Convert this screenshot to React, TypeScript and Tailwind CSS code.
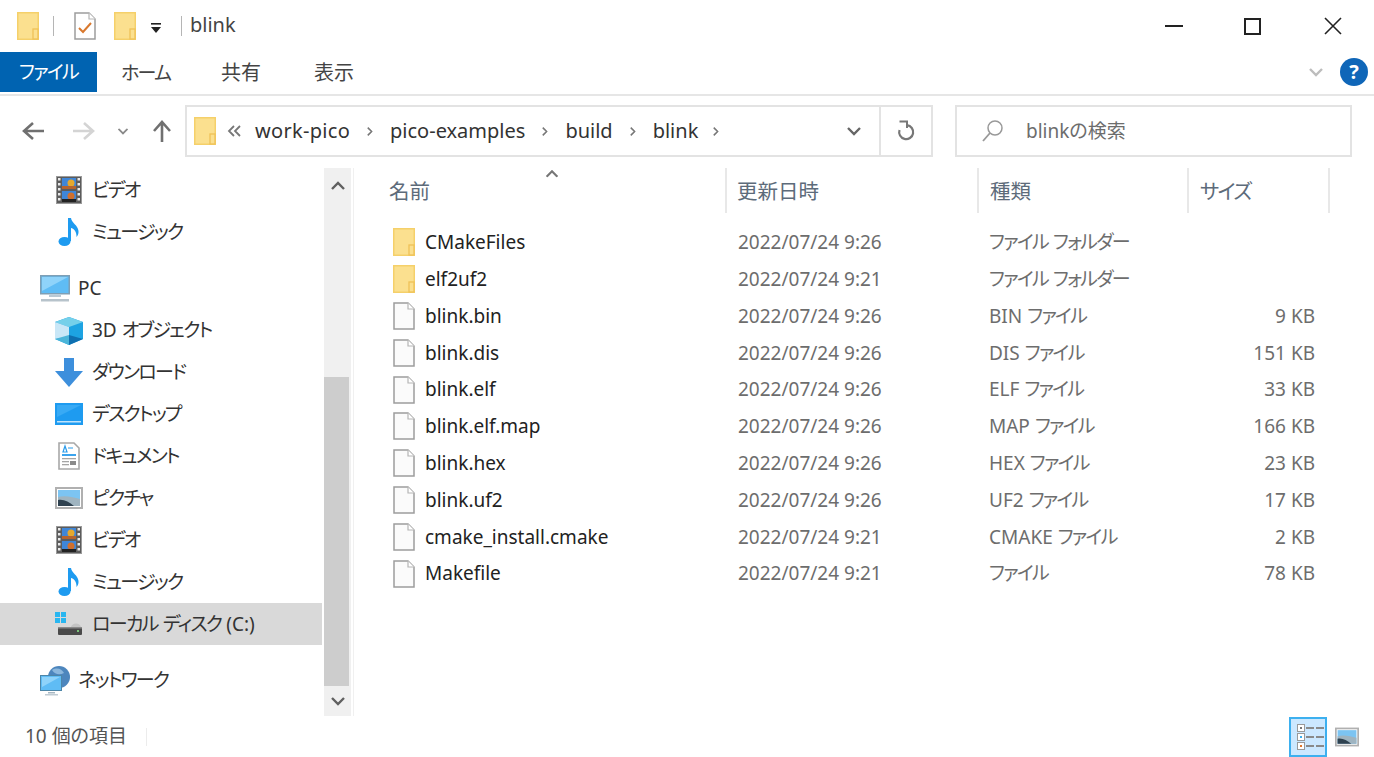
import React from 'react';

const FONT = '"Noto Sans", "Noto Sans CJK JP", sans-serif';

// katakana runs sit tighter in the reference than in Noto, so pull just those in
const Txt: React.FC<{ children: string }> = ({ children }) => (
  <>
    {children.split(/([\u30A0-\u30FF]+)/).map((part, i) =>
      i % 2 === 1 ? <span key={i} className="tracking-[-1.7px]">{part}</span> : part
    )}
  </>
);

const FolderIcon: React.FC<{ className?: string }> = ({ className = '' }) => (
  <svg className={className} viewBox="0 0 22 28" width="22" height="28">
    <rect x="0.75" y="0.75" width="20.5" height="26.5" fill="#fbe08f" stroke="#f5d06a" strokeWidth="1.5" />
    <rect x="16" y="17" width="5" height="10" fill="#fbe08f" stroke="#efc258" strokeWidth="1.3" />
  </svg>
);

const FileIcon: React.FC = () => (
  <svg viewBox="0 0 22 28" width="22" height="28">
    <path d="M1 1H15L21 7V27H1Z" fill="#fbfbfb" stroke="#9d9d9d" strokeWidth="1.5" />
    <path d="M15 1V7H21" fill="#fff" stroke="#b5b5b5" strokeWidth="1.2" />
  </svg>
);

const FilmIcon: React.FC = () => (
  <svg viewBox="0 0 26 28" width="26" height="28">
    <rect x="0.5" y="0.5" width="25" height="27" fill="#5c5c5c" stroke="#9a9a9a" />
    <rect x="6" y="2" width="14" height="11" fill="#3f86d8" />
    <rect x="6" y="15" width="14" height="11" fill="#3f86d8" />
    <circle cx="15" cy="7" r="3.5" fill="#e5a82e" />
    <rect x="6" y="10" width="14" height="3" fill="#b5642e" />
    <circle cx="15" cy="20" r="3.5" fill="#d2702c" />
    <rect x="6" y="23" width="14" height="3" fill="#222" />
    {[3, 8, 13, 18, 23].map(y => (
      <React.Fragment key={y}>
        <rect x="2" y={y - 1} width="2.5" height="2.5" fill="#e8e8e8" />
        <rect x="21.5" y={y - 1} width="2.5" height="2.5" fill="#e8e8e8" />
      </React.Fragment>
    ))}
  </svg>
);

const MusicIcon: React.FC = () => (
  <svg viewBox="0 0 22 30" width="22" height="30">
    <ellipse cx="6.5" cy="24.5" rx="6" ry="4.6" fill="#1e9bf0" />
    <path d="M10 24V1H13C13.5 6 20 8 20.5 14C20.8 17 19.5 19 18.5 20C18.8 14 15.5 11.5 13 11V24Z" fill="#1e9bf0" />
  </svg>
);

const MonitorIcon: React.FC = () => (
  <svg viewBox="0 0 30 28" width="30" height="28">
    <rect x="0.75" y="0.75" width="28.5" height="18" fill="#5fbcf5" stroke="#7f9fb5" strokeWidth="1.5" />
    <path d="M2 2H28L2 16Z" fill="#8fd3fa" />
    <rect x="9" y="20" width="12" height="2" fill="#b9c9d4" />
    <rect x="1" y="24" width="28" height="2.5" fill="#b7c3cb" />
  </svg>
);

const CubeIcon: React.FC = () => (
  <svg viewBox="0 0 28 28" width="28" height="28">
    <path d="M14 0L28 5V22L14 28L0 22V5Z" fill="#1da3e2" />
    <path d="M0 5L14 0L28 5L14 10Z" fill="#75d0ea" />
    <path d="M0 5L14 10V20L0 22Z" fill="#c9e7f7" />
    <path d="M0 22L14 18V28Z" fill="#4bb5d9" />
    <path d="M28 22L14 18V28Z" fill="#0f6fb0" />
  </svg>
);

const DownloadIcon: React.FC = () => (
  <svg viewBox="0 0 28 30" width="28" height="30">
    <path d="M9 0H19V13H28L14 29L0 13H9Z" fill="#3d8fdc" />
  </svg>
);

const DesktopIcon: React.FC = () => (
  <svg viewBox="0 0 28 22" width="28" height="22">
    <rect width="28" height="22" fill="#1e9bf0" />
    <path d="M2 2H26L2 14Z" fill="#38aaf5" />
    <rect x="2" y="18" width="24" height="1.5" fill="#bfe3fb" />
  </svg>
);

const DocIcon: React.FC = () => (
  <svg viewBox="0 0 22 28" width="22" height="28">
    <path d="M1 1H16L21 6V27H1Z" fill="#fff" stroke="#a8a8a8" strokeWidth="1.6" />
    <path d="M7 4L5 10H9ZM10 6H15" stroke="#2a9bea" strokeWidth="1.2" fill="none" />
    <rect x="4" y="12" width="14" height="2" fill="#3ba4ee" />
    <rect x="4" y="16" width="14" height="1.3" fill="#a5a5a5" />
    <rect x="4" y="19" width="7" height="1.3" fill="#a5a5a5" />
    <rect x="12" y="19" width="6" height="4" fill="#8a8a8a" />
    <rect x="4" y="22" width="7" height="1.3" fill="#a5a5a5" />
  </svg>
);

const PictureIcon: React.FC<{ w?: number; h?: number }> = ({ w = 28, h = 22 }) => (
  <svg viewBox="0 0 28 22" width={w} height={h}>
    <rect x="1" y="1" width="26" height="20" fill="#fff" stroke="#b0b0b0" strokeWidth="2" />
    <rect x="3" y="3" width="22" height="16" fill="#7cc4f2" />
    <path d="M3 10C10 8 18 10 25 12V19H3Z" fill="#9fb4c0" />
    <path d="M3 13C9 12 14 15 19 19H3Z" fill="#2f4250" />
  </svg>
);

const DriveIcon: React.FC = () => (
  <svg viewBox="0 0 28 24" width="28" height="24">
    <rect x="0" y="0" width="5" height="5" fill="#29b6f0" />
    <rect x="6" y="0" width="5" height="5" fill="#29b6f0" />
    <rect x="0" y="6" width="5" height="5" fill="#29b6f0" />
    <rect x="6" y="6" width="5" height="5" fill="#29b6f0" />
    <path d="M16 15C17 11 24 10 26 15Z" fill="#c4c4c4" />
    <rect x="3" y="15" width="24" height="8" rx="1" fill="#4a4a4a" />
    <rect x="3" y="15" width="24" height="1.5" fill="#8a8a8a" />
    <rect x="22" y="18" width="2" height="2" fill="#7bc47b" />
  </svg>
);

const NetworkIcon: React.FC = () => (
  <svg viewBox="0 0 30 30" width="30" height="30">
    <circle cx="19" cy="11" r="11" fill="#4d86bd" />
    <path d="M12 4C17 1 22 3 24 7C20 9 15 9 12 4Z" fill="#8bb7dd" />
    <rect x="0.5" y="9.5" width="21" height="15" fill="#5fbcf5" stroke="#4d86a8" />
    <path d="M2 11H20L2 21Z" fill="#8fd3fa" />
    <rect x="8" y="26" width="7" height="1.5" fill="#a7b7c2" />
    <rect x="5" y="28" width="13" height="1.5" fill="#c0ccd4" />
  </svg>
);

const CheckIcon: React.FC = () => (
  <svg viewBox="0 0 22 28" width="22" height="28">
    <path d="M1 1H15L21 7V27H1Z" fill="#fff" stroke="#9d9d9d" strokeWidth="1.5" />
    <path d="M15 1V7H21" fill="#fff" stroke="#b5b5b5" strokeWidth="1.2" />
    <path d="M5 16L9 20L17 11" fill="none" stroke="#d9782d" strokeWidth="2" />
  </svg>
);

const Chevron: React.FC<{ up?: boolean; className?: string; color?: string }> = ({ up, className = '', color = '#666' }) => (
  <svg className={className} viewBox="0 0 14 9" width="14" height="9">
    <path d={up ? 'M1 8L7 2L13 8' : 'M1 1L7 7L13 1'} fill="none" stroke={color} strokeWidth="2.4" />
  </svg>
);

const navItems = [
  { label: 'ビデオ', icon: <FilmIcon /> },
  { label: 'ミュージック', icon: <MusicIcon /> },
  { label: 'PC', icon: <MonitorIcon />, top: true, gap: true },
  { label: '3D オブジェクト', icon: <CubeIcon /> },
  { label: 'ダウンロード', icon: <DownloadIcon /> },
  { label: 'デスクトップ', icon: <DesktopIcon /> },
  { label: 'ドキュメント', icon: <DocIcon /> },
  { label: 'ピクチャ', icon: <PictureIcon /> },
  { label: 'ビデオ', icon: <FilmIcon /> },
  { label: 'ミュージック', icon: <MusicIcon /> },
  { label: 'ローカル ディスク (C:)', icon: <DriveIcon />, selected: true },
  { label: 'ネットワーク', icon: <NetworkIcon />, top: true, gap: true },
];

const files = [
  { name: 'CMakeFiles', date: '2022/07/24 9:26', type: 'ファイル フォルダー', size: '', folder: true },
  { name: 'elf2uf2', date: '2022/07/24 9:21', type: 'ファイル フォルダー', size: '', folder: true },
  { name: 'blink.bin', date: '2022/07/24 9:26', type: 'BIN ファイル', size: '9 KB' },
  { name: 'blink.dis', date: '2022/07/24 9:26', type: 'DIS ファイル', size: '151 KB' },
  { name: 'blink.elf', date: '2022/07/24 9:26', type: 'ELF ファイル', size: '33 KB' },
  { name: 'blink.elf.map', date: '2022/07/24 9:26', type: 'MAP ファイル', size: '166 KB' },
  { name: 'blink.hex', date: '2022/07/24 9:26', type: 'HEX ファイル', size: '23 KB' },
  { name: 'blink.uf2', date: '2022/07/24 9:26', type: 'UF2 ファイル', size: '17 KB' },
  { name: 'cmake_install.cmake', date: '2022/07/24 9:21', type: 'CMAKE ファイル', size: '2 KB' },
  { name: 'Makefile', date: '2022/07/24 9:21', type: 'ファイル', size: '78 KB' },
];

const crumbs = ['work-pico', 'pico-examples', 'build', 'blink'];

const App: React.FC = () => {
  return (
    <div className="w-[1374px] h-[757px] bg-white overflow-hidden flex flex-col text-[19px] text-[#333] [font-feature-settings:'palt']" style={{ fontFamily: FONT }}>
      {/* Title bar */}
      <div className="h-[52px] flex items-center shrink-0">
        <FolderIcon className="ml-[17px]" />
        <div className="ml-[14px] w-px h-[20px] bg-[#b5b5b5]" />
        <div className="ml-[20px] flex"><CheckIcon /></div>
        <FolderIcon className="ml-[18px]" />
        <svg className="ml-[14px] mt-[3px]" viewBox="0 0 12 12" width="12" height="12">
          <rect x="1" y="1" width="10" height="1.6" fill="#222" />
          <path d="M1 5H11L6 11Z" fill="#222" />
        </svg>
        <div className="ml-[19px] w-px h-[20px] bg-[#b5b5b5]" />
        <span className="ml-[8px] mb-[2px] text-[#444] text-[20px] leading-none">blink</span>
        <div className="ml-auto flex items-center">
          <div className="w-[18px] h-[2px] bg-[#222] mr-[61px]" />
          <div className="w-[17px] h-[17px] border-2 border-[#222] mr-[63px]" />
          <svg className="mr-[32px]" viewBox="0 0 18 18" width="18" height="18">
            <path d="M1 1L17 17M17 1L1 17" stroke="#222" strokeWidth="1.6" />
          </svg>
        </div>
      </div>

      {/* Ribbon tabs */}
      <div className="h-[44px] shrink-0 flex items-start border-b-2 border-[#e6e6e6]">
        <div className="w-[97px] h-[40px] bg-[#0063b1] text-white flex items-center justify-center"><Txt>ファイル</Txt></div>
        <div className="h-[40px] w-[100px] flex items-center pt-[2px] pl-[24px] text-[#444]"><Txt>ホーム</Txt></div>
        <div className="h-[40px] w-[117px] flex items-center pt-[2px] pl-[24px] text-[#444] text-[20px]">共有</div>
        <div className="h-[40px] flex items-center pt-[2px] text-[#444] text-[20px]">表示</div>
        <div className="ml-auto h-[40px] flex items-center">
          <Chevron className="mr-[17px]" color="#bdbdbd" />
          <div className="w-[28px] h-[28px] mr-[6px] rounded-full bg-[#0f66b8] text-white text-[20px] font-bold flex items-center justify-center">?</div>
        </div>
      </div>

      {/* Address row */}
      <div className="h-[72px] shrink-0 flex items-start pt-[9px]">
        <div className="w-[185px] h-[52px] flex items-center">
          <svg className="ml-[21px]" viewBox="0 0 24 22" width="24" height="22">
            <path d="M23 11H4M12 3L3 11L12 19" fill="none" stroke="#707070" strokeWidth="2.6" />
          </svg>
          <svg className="ml-[27px]" viewBox="0 0 24 22" width="24" height="22">
            <path d="M1 11H20M12 3L21 11L12 19" fill="none" stroke="#d4d4d4" strokeWidth="2.6" />
          </svg>
          <Chevron className="ml-[20px] scale-75" color="#8a8a8a" />
          <svg className="ml-[21px]" viewBox="0 0 22 24" width="22" height="24">
            <path d="M11 23V4M3 12L11 3L19 12" fill="none" stroke="#707070" strokeWidth="2.6" />
          </svg>
        </div>
        <div className="w-[748px] h-[52px] border-2 border-[#e3e3e3] flex items-center text-[20px]">
          <FolderIcon className="ml-[7px]" />
          <svg className="ml-[11px]" viewBox="0 0 15 12" width="15" height="12">
            <path d="M7 1L2 6L7 11M13 1L8 6L13 11" fill="none" stroke="#777" strokeWidth="1.8" />
          </svg>
          <span className="ml-[13px] tracking-[0.3px]">{crumbs[0]}</span>
          {crumbs.slice(1).map(c => (
            <React.Fragment key={c}>
              <Chevron className="mx-[13px] rotate-[-90deg] scale-[0.65]" color="#777" />
              <span>{c}</span>
            </React.Fragment>
          ))}
          <Chevron className="ml-[11px] rotate-[-90deg] scale-[0.65]" color="#777" />
          <Chevron className="ml-auto mr-[18px]" color="#666" />
          <div className="w-[52px] h-full border-l-2 border-[#e3e3e3] flex items-center justify-center">
            <svg viewBox="0 0 20 22" width="20" height="22">
              <path d="M11 5.2A7 7 0 1 1 3.5 10" fill="none" stroke="#777" strokeWidth="2.2" />
              <path d="M3.5 1.5H11V8" fill="none" stroke="#777" strokeWidth="2" />
            </svg>
          </div>
        </div>
        <div className="ml-[22px] w-[397px] h-[52px] border-2 border-[#e3e3e3] flex items-center">
          <svg className="ml-[24px]" viewBox="0 0 24 24" width="24" height="24">
            <circle cx="14" cy="9" r="7" fill="none" stroke="#999" strokeWidth="1.5" />
            <path d="M9 14L2 22" stroke="#999" strokeWidth="1.8" />
          </svg>
          <span className="ml-[21px] text-[#6d6d6d]">blinkの検索</span>
        </div>
      </div>

      {/* Body */}
      <div className="h-[548px] shrink-0 flex min-h-0">
        {/* Navigation pane */}
        <div className="w-[322px] shrink-0 flex flex-col pt-[1px]">
          {navItems.map((item, i) => (
            <div
              key={i}
              className={`h-[41.9px] shrink-0 flex items-center ${item.gap ? 'mt-[15px]' : ''} ${item.selected ? 'bg-[#d9d9d9]' : ''}`}
            >
              <div className={`flex items-center justify-center shrink-0 ${item.top ? 'ml-[40px] w-[30px]' : 'ml-[55px] w-[28px]'}`}>{item.icon}</div>
              <span className={`whitespace-nowrap text-[#333] ${item.top ? 'ml-[8px]' : 'ml-[9px]'}`}><Txt>{item.label}</Txt></span>
            </div>
          ))}
        </div>

        {/* Scrollbar */}
        <div className="ml-[2px] w-[27px] h-[548px] bg-[#f0f0f0] flex flex-col shrink-0">
          <div className="h-[34px] flex items-center justify-center shrink-0"><Chevron up color="#606060" /></div>
          <div className="h-[175px] shrink-0" />
          <div className="h-[309px] shrink-0 bg-[#cdcdcd] mr-[2px]" />
          <div className="h-[30px] flex items-center justify-center shrink-0"><Chevron color="#606060" /></div>
        </div>
        <div className="ml-[2px] w-px h-[548px] bg-[#f0f0f0] shrink-0" />

        {/* File list */}
        <div className="flex-1 min-w-0 flex flex-col">
          <div className="h-[45px] flex text-[#5d6b7a] text-[20.5px] ml-[24px] shrink-0">
            <div className="w-[349px] border-r-2 border-[#e8e8e8] pt-[2px] pl-[11px] flex items-center relative">
              名前
              <Chevron up className="absolute left-[167px] top-[1px] scale-90" color="#777" />
            </div>
            <div className="w-[252px] border-r-2 border-[#e8e8e8] pt-[2px] pl-[10px] flex items-center">更新日時</div>
            <div className="w-[210px] border-r-2 border-[#e8e8e8] pt-[2px] pl-[11px] flex items-center">種類</div>
            <div className="w-[141px] border-r-2 border-[#e8e8e8] pt-[2px] pl-[11px] flex items-center"><Txt>サイズ</Txt></div>
          </div>
          <div className="pt-[11px] pl-[39px]">
            {files.map(f => (
              <div key={f.name} className="h-[36.8px] flex items-center">
                <div className="w-[345px] flex items-center shrink-0">
                  {f.folder ? <FolderIcon /> : <FileIcon />}
                  <span className="ml-[10px] text-[#222] whitespace-nowrap">{f.name}</span>
                </div>
                <div className="w-[251px] shrink-0 text-[#6d6d6d] whitespace-nowrap">{f.date}</div>
                <div className="w-[200px] shrink-0 text-[#6d6d6d] whitespace-nowrap"><Txt>{f.type}</Txt></div>
                <div className="w-[126px] shrink-0 text-[#6d6d6d] text-right whitespace-nowrap">{f.size}</div>
              </div>
            ))}
          </div>
        </div>
      </div>

      {/* Status bar */}
      <div className="flex-1 flex items-center relative">
        <span className="ml-[25px] text-[#555]">10 個の項目</span>
        <div className="ml-[19px] w-px h-[18px] bg-[#ececec]" />
        <div className="ml-auto mr-[15px] flex items-center">
          <div className="w-[38px] h-[40px] bg-[#cce8ff] border-2 border-[#3db0ef] flex flex-col justify-center gap-[1px] pl-[6px]">
            {['#777', '#3db0ef', '#e2762a'].map(c => (
              <div key={c} className="flex items-center">
                <div className="w-[8px] h-[8px] bg-white border border-[#999] flex items-center justify-center">
                  <div className="w-[2px] h-[2px]" style={{ backgroundColor: c }} />
                </div>
                <div className="ml-[1px] w-[8px] h-[2px] bg-[#8a8a8a]" />
                <div className="ml-[2px] w-[8px] h-[2px] bg-[#8a8a8a]" />
              </div>
            ))}
          </div>
          <div className="ml-[8px]"><PictureIcon w={24} h={20} /></div>
        </div>
      </div>
    </div>
  );
};

export default App;
